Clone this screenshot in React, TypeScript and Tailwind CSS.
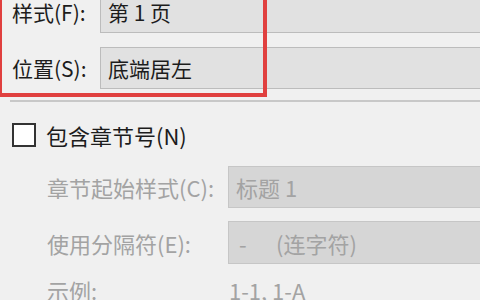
export default function App() {
  return (
    <div
      className="relative w-[480px] h-[300px] overflow-hidden bg-[#f0f0f0] text-[21px] leading-none"
      style={{ fontFamily: '"Noto Sans CJK SC", "Microsoft YaHei", sans-serif' }}
    >
      <div className="-mt-[8px] flex items-center">
        <span className="w-[100px] pl-[12px] text-[#1c1c1c]">样式(F):</span>
        <div className="flex h-[41px] flex-1 -mr-[10px] items-center border border-[#bcbcbc] bg-[#e1e1e1] pl-[7px] text-[#1c1c1c]">
          第 1 页
        </div>
      </div>
      <div className="mt-[14px] flex items-center">
        <span className="w-[100px] pl-[12px] text-[#1c1c1c]">位置(S):</span>
        <div className="flex h-[42px] flex-1 -mr-[10px] items-center border border-[#bcbcbc] bg-[#e1e1e1] pl-[7px] text-[#1c1c1c]">
          底端居左
        </div>
      </div>
      <div className="mt-[11px] ml-[10px] border-t-2 border-[#c8c8c8]" />

      <div className="mt-[21px] flex items-center text-[22px]">
        <div className="ml-[12px] h-[24px] w-[24px] border-2 border-[#333333] bg-white" />
        <span className="ml-[10px] text-[#1c1c1c]">包含章节号(N)</span>
      </div>

      <div className="mt-[19px] flex items-center text-[22px]">
        <span className="w-[228px] pl-[47px] text-[#a3a3a3]">章节起始样式(C):</span>
        <div className="flex h-[42px] flex-1 -mr-[10px] items-center border border-[#c6c6c6] bg-[#d6d6d6] pl-[7px] text-[#a3a3a3]">
          标题 1
        </div>
      </div>
      <div className="mt-[13px] flex items-center text-[22px]">
        <span className="w-[228px] pl-[47px] text-[#a3a3a3]">使用分隔符(E):</span>
        <div className="flex h-[43px] flex-1 -mr-[10px] items-center border border-[#c6c6c6] bg-[#d6d6d6] pl-[10px] text-[#a3a3a3]">
          <span className="w-[37px]">-</span>
          <span>(连字符)</span>
        </div>
      </div>
      <div className="mt-[15px] flex items-center text-[22px]">
        <span className="w-[229px] pl-[47px] text-[#a3a3a3]">示例:</span>
        <span className="text-[#a3a3a3]">1-1, 1-A</span>
      </div>

      <div className="pointer-events-none absolute -left-[2px] -top-[10px] h-[107px] w-[269px] border-4 border-[#e0403f]" />
    </div>
  );
}
